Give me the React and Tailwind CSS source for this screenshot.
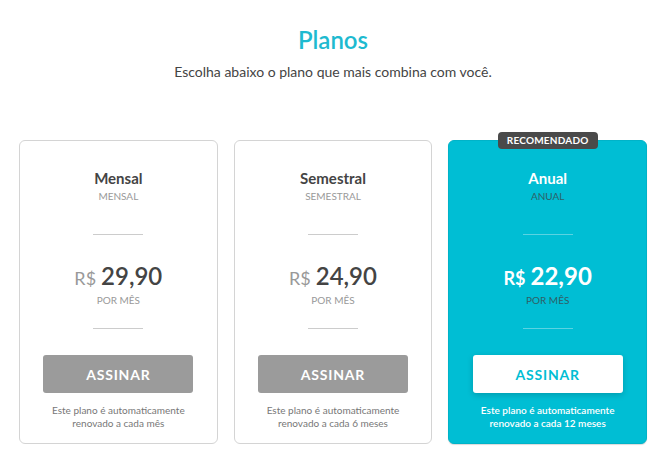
const plans = [
  { name: "Mensal", sub: "MENSAL", price: "29,90", note: "renovado a cada mês" },
  { name: "Semestral", sub: "SEMESTRAL", price: "24,90", note: "renovado a cada 6 meses" },
  { name: "Anual", sub: "ANUAL", price: "22,90", note: "renovado a cada 12 meses", featured: true },
];

function PlanCard({ plan }) {
  const f = plan.featured;
  return (
    <div
      className={
        "relative flex-1 flex flex-col items-center rounded-md border pt-[27px] pb-[13px] " +
        (f ? "bg-[#00bed4] border-[#00b3c8] shadow-[0_1px_1px_rgba(0,0,0,0.15)]" : "bg-white border-[#d4d4d4]")
      }
    >
      {f && (
        <div className="absolute -top-[9px] left-1/2 -translate-x-1/2 rounded-[4px] bg-[#4a4a4a] w-[100px] h-[17px] flex items-center justify-center text-[10px] font-bold text-white tracking-[0.2px]">
          RECOMENDADO
        </div>
      )}
      <div className={"text-[15px] leading-5 font-bold " + (f ? "text-white" : "text-[#444]")}>{plan.name}</div>
      <div className={"text-[10px] leading-4 " + (f ? "text-[#2f5f66]" : "text-[#999]")}>{plan.sub}</div>
      <div className={"mt-[30px] h-px w-[50px] " + (f ? "bg-[#5ad3e2]" : "bg-[#ccc]")} />
      <div className="mt-[25px] h-8 flex items-baseline overflow-visible">
        <span className={"text-[18px] leading-8 mr-[5px] " + (f ? "text-white font-bold" : "text-[#999]")}>R$</span>
        <span className={"text-[24px] leading-8 " + (f ? "text-white font-bold" : "text-[#444] font-semibold")}>{plan.price}</span>
      </div>
      <div className={"text-[10px] leading-4 " + (f ? "text-[#2f5f66]" : "text-[#999]")}>POR MÊS</div>
      <div className={"mt-[20px] h-px w-[50px] " + (f ? "bg-[#5ad3e2]" : "bg-[#ccc]")} />
      <button
        className={
          "mt-[26px] w-[150px] h-[38px] rounded-[3px] text-[14px] font-bold tracking-[0.8px] " +
          (f ? "bg-white text-[#00bed4] shadow-[0_2px_6px_rgba(0,0,0,0.18)]" : "bg-[#9b9b9b] text-white")
        }
      >
        ASSINAR
      </button>
      <div className={"mt-[11px] text-center text-[10px] leading-[13px] " + (f ? "text-white font-semibold" : "text-[#777]")}>
        Este plano é automaticamente
        <br />
        {plan.note}
      </div>
    </div>
  );
}

export default function App() {
  return (
    <div className="w-full min-h-[456px] bg-white pt-6 font-['Lato','Open_Sans',sans-serif]">
      <h1 className="text-center text-[24px] leading-8 font-semibold text-[#1ebad0]">Planos</h1>
      <p className="mt-[6px] text-center text-[14px] leading-5 text-[#444]">
        Escolha abaixo o plano que mais combina com você.
      </p>
      <div className="mt-[58px] flex gap-4 px-[19px]">
        {plans.map((p) => (
          <PlanCard key={p.name} plan={p} />
        ))}
      </div>
    </div>
  );
}
